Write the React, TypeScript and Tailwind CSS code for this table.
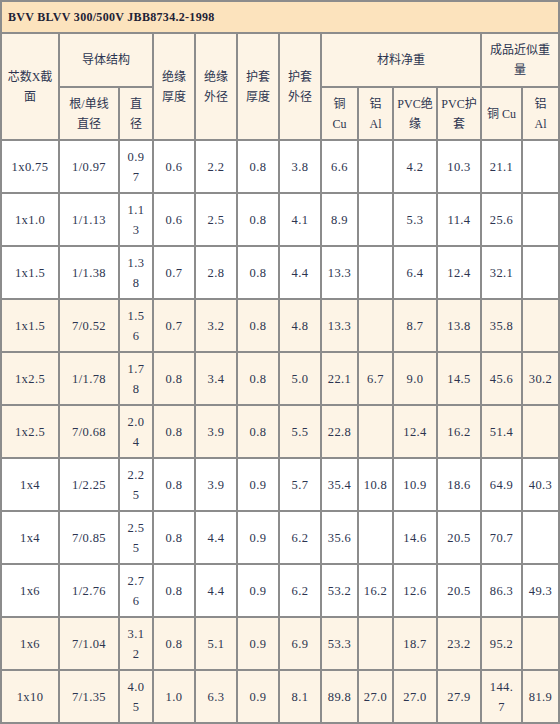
const COL_WIDTHS = [56, 58, 32, 40, 40, 40, 40, 35, 33, 42, 42, 39, 35];

type Row = { cream: boolean; cells: string[] };

// each cell: use "|" to mark a forced line break
const ROWS: Row[] = [
  { cream: false, cells: ["1x0.75", "1/0.97", "0.9|7", "0.6", "2.2", "0.8", "3.8", "6.6", "", "4.2", "10.3", "21.1", ""] },
  { cream: false, cells: ["1x1.0", "1/1.13", "1.1|3", "0.6", "2.5", "0.8", "4.1", "8.9", "", "5.3", "11.4", "25.6", ""] },
  { cream: false, cells: ["1x1.5", "1/1.38", "1.3|8", "0.7", "2.8", "0.8", "4.4", "13.3", "", "6.4", "12.4", "32.1", ""] },
  { cream: true, cells: ["1x1.5", "7/0.52", "1.5|6", "0.7", "3.2", "0.8", "4.8", "13.3", "", "8.7", "13.8", "35.8", ""] },
  { cream: true, cells: ["1x2.5", "1/1.78", "1.7|8", "0.8", "3.4", "0.8", "5.0", "22.1", "6.7", "9.0", "14.5", "45.6", "30.2"] },
  { cream: true, cells: ["1x2.5", "7/0.68", "2.0|4", "0.8", "3.9", "0.8", "5.5", "22.8", "", "12.4", "16.2", "51.4", ""] },
  { cream: false, cells: ["1x4", "1/2.25", "2.2|5", "0.8", "3.9", "0.9", "5.7", "35.4", "10.8", "10.9", "18.6", "64.9", "40.3"] },
  { cream: false, cells: ["1x4", "7/0.85", "2.5|5", "0.8", "4.4", "0.9", "6.2", "35.6", "", "14.6", "20.5", "70.7", ""] },
  { cream: false, cells: ["1x6", "1/2.76", "2.7|6", "0.8", "4.4", "0.9", "6.2", "53.2", "16.2", "12.6", "20.5", "86.3", "49.3"] },
  { cream: true, cells: ["1x6", "7/1.04", "3.1|2", "0.8", "5.1", "0.9", "6.9", "53.3", "", "18.7", "23.2", "95.2", ""] },
  { cream: true, cells: ["1x10", "7/1.35", "4.0|5", "1.0", "6.3", "0.9", "8.1", "89.8", "27.0", "27.0", "27.9", "144.|7", "81.9"] },
];

function Lines({ text }: { text: string }) {
  const parts = text.split("|");
  return (
    <>
      {parts.map((p, i) => (
        <span key={i} className="block">
          {p}
        </span>
      ))}
    </>
  );
}

function Head({
  text,
  rowSpan,
  colSpan,
  h,
}: {
  text: string;
  rowSpan?: number;
  colSpan?: number;
  h?: string;
}) {
  return (
    <th
      rowSpan={rowSpan}
      colSpan={colSpan}
      className={`bg-[#fdf4e6] p-0 text-center align-middle text-[12px] font-normal leading-[20px] text-[#2c3450] ${h ?? ""}`}
    >
      <Lines text={text} />
    </th>
  );
}

export default function App() {
  return (
    <div
      className="h-[724px] w-[560px] overflow-hidden bg-white"
      style={{ fontFamily: '"Liberation Serif", "Noto Sans CJK SC", serif' }}
    >
      <table className="w-[560px] table-fixed border-separate border-spacing-[2px] bg-[#8c8c8c]">
        <colgroup>
          {COL_WIDTHS.map((w, i) => (
            <col key={i} style={{ width: w }} />
          ))}
        </colgroup>
        <thead>
          <tr>
            <th
              colSpan={13}
              className="h-[30px] bg-[#fce3bd] p-0 pl-[6px] text-left align-middle text-[12px] font-bold tracking-[0.3px] text-[#1e2236]"
            >
              BVV BLVV 300/500V JBB8734.2-1998
            </th>
          </tr>
          <tr>
            <Head text="芯数X截|面" rowSpan={2} />
            <Head text="导体结构" colSpan={2} h="h-[52px]" />
            <Head text="绝缘|厚度" rowSpan={2} />
            <Head text="绝缘|外径" rowSpan={2} />
            <Head text="护套|厚度" rowSpan={2} />
            <Head text="护套|外径" rowSpan={2} />
            <Head text="材料净重" colSpan={4} />
            <Head text="成品近似重|量" colSpan={2} />
          </tr>
          <tr>
            <Head text="根/单线|直径" h="h-[51px]" />
            <Head text="直|径" />
            <Head text="铜|Cu" />
            <Head text="铝|Al" />
            <Head text="PVC绝|缘" />
            <Head text="PVC护|套" />
            <Head text="铜 Cu" />
            <Head text="铝|Al" />
          </tr>
        </thead>
        <tbody>
          {ROWS.map((row, r) => (
            <tr key={r}>
              {row.cells.map((c, i) => (
                <td
                  key={i}
                  className={`h-[51px] p-0 text-center align-middle text-[12.5px] leading-[20px] tracking-[0.4px] text-[#2c3450] ${
                    row.cream ? "bg-[#fdf4e6]" : "bg-white"
                  }`}
                >
                  <Lines text={c} />
                </td>
              ))}
            </tr>
          ))}
        </tbody>
      </table>
    </div>
  );
}
